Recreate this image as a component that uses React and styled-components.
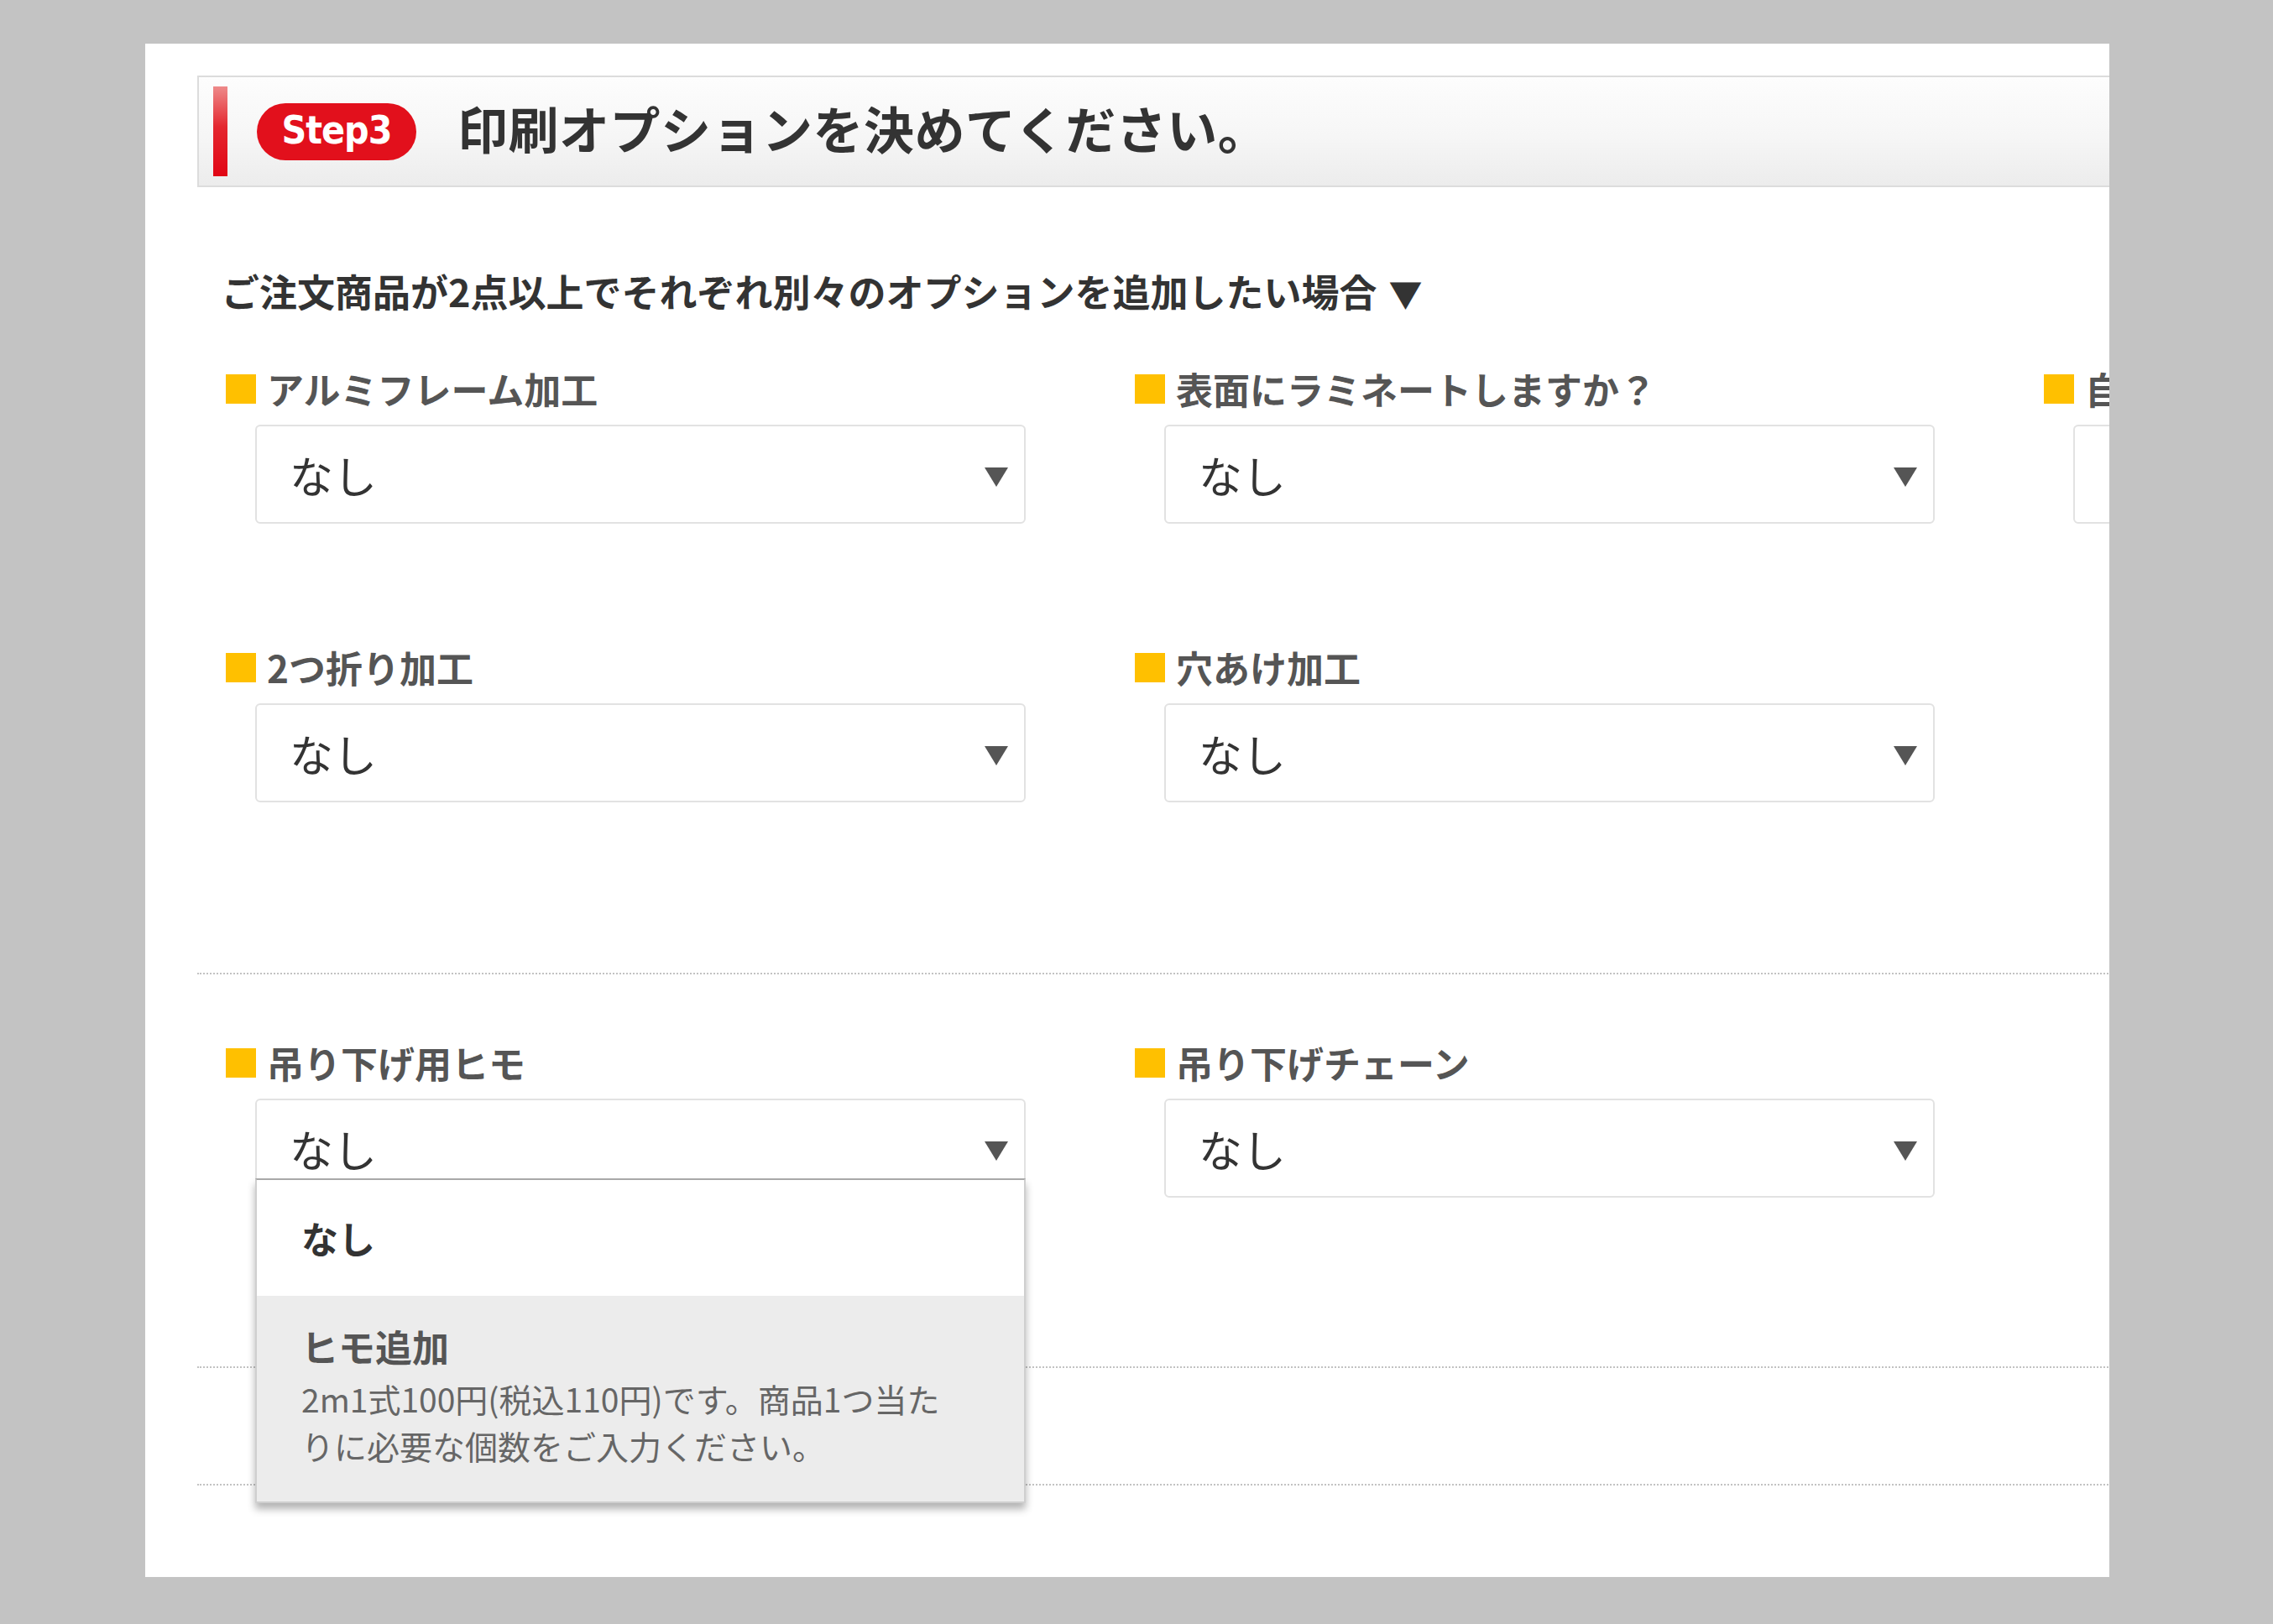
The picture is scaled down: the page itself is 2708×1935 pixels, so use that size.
import React from "react";
import styled, { createGlobalStyle } from "styled-components";

const Global = createGlobalStyle`
  html, body { margin: 0; padding: 0; }
  body {
    background: #c3c3c3;
    font-family: "Noto Sans CJK JP", "Noto Sans", sans-serif;
  }
`;

const Page = styled.div`
  box-sizing: border-box;
  height: 1935px;
  padding: 52px 0 0 173px;
  background: #c3c3c3;
`;

const Panel = styled.div`
  box-sizing: border-box;
  width: 2340px;
  height: 1827px;
  background: #fff;
  overflow: hidden;
  padding: 38px 0 0 62px;
`;

const Inner = styled.div`
  width: 2600px;
`;

const Header = styled.div`
  box-sizing: border-box;
  height: 133px;
  display: flex;
  align-items: center;
  border: 2px solid #dcdcdc;
  border-right: none;
  background: linear-gradient(#fdfdfd 0%, #f6f6f6 55%, #ececec 100%);
`;

const RedBar = styled.div`
  width: 17px;
  height: 107px;
  margin-left: 17px;
  background: linear-gradient(#ee8a8a 0%, #e4272f 45%, #e10514 100%);
`;

const Badge = styled.div`
  box-sizing: border-box;
  width: 190px;
  height: 68px;
  margin-left: 35px;
  border-radius: 34px;
  background: #e2101c;
  color: #fff;
  display: flex;
  align-items: center;
  justify-content: center;
  font-family: "DejaVu Sans Condensed", "DejaVu Sans", sans-serif;
  font-weight: 700;
  font-size: 46px;
  letter-spacing: -1px;
  padding-bottom: 4px;
`;

const Title = styled.h1`
  margin: 0 0 0 49px;
  padding-bottom: 10px;
  font-size: 60px;
  font-weight: 700;
  color: #333;
  line-height: 1;
  letter-spacing: 0.5px;
`;

const Lead = styled.p`
  margin: 94px 0 0 29px;
  font-size: 45px;
  line-height: 60px;
  height: 60px;
  font-weight: 700;
  color: #333;
`;

const LeadMark = styled.span`
  margin-left: 14px;
  font-size: 40px;
`;

const Grid = styled.div`
  display: grid;
  grid-template-columns: repeat(3, 953px);
  column-gap: 130px;
  row-gap: 146px;
  align-items: start;
  margin: ${(p) => p.$top}px 0 0 34px;
`;

const Item = styled.div`
  display: flex;
  flex-direction: column;
`;

const Label = styled.div`
  display: flex;
  align-items: center;
  gap: 13px;
  height: 50px;
  font-size: 44px;
  font-weight: 700;
  color: #555;
  white-space: nowrap;
`;

const Square = styled.span`
  width: 36px;
  height: 35px;
  background: #ffc000;
  flex: none;
`;

const SelectWrap = styled.div`
  position: relative;
  margin: 18px 0 0 35px;
  width: 918px;
`;

const Select = styled.div`
  box-sizing: border-box;
  height: 118px;
  border: 2px solid #e2e2e2;
  border-radius: 6px;
  background: #fff;
  display: flex;
  align-items: center;
  justify-content: space-between;
  padding: 0 19px 0 39px;
  font-size: 52px;
  color: #333;
`;

const Arrow = styled.span`
  width: 0;
  height: 0;
  border-left: 14px solid transparent;
  border-right: 14px solid transparent;
  border-top: 23px solid #555;
  margin-top: 6px;
`;

const Menu = styled.div`
  position: absolute;
  top: 95px;
  left: 0;
  width: 100%;
  box-sizing: border-box;
  border: 2px solid #cfcfcf;
  border-top-color: #a8a8a8;
  background: #fff;
  box-shadow: 0 7px 9px rgba(0, 0, 0, 0.3);
  z-index: 2;
`;

const MenuItem = styled.div`
  box-sizing: border-box;
  min-height: ${(p) => p.$h}px;
  padding: ${(p) => (p.$active ? "34px 40px 39px 53px" : "0 40px 0 53px")};
  display: flex;
  flex-direction: column;
  justify-content: ${(p) => (p.$active ? "flex-start" : "center")};
  background: ${(p) => (p.$active ? "#ececec" : "#fff")};
`;

const MenuTitle = styled.div`
  font-size: 44px;
  line-height: 52px;
  font-weight: 700;
  color: ${(p) => (p.$muted ? "#555" : "#333")};
`;

const MenuDesc = styled.div`
  margin-top: 8px;
  font-size: 39px;
  line-height: 56px;
  color: #666;
`;

const Dotted = styled.div`
  margin-top: ${(p) => p.$top}px;
  border-top: 2px dotted #c2c2c2;
`;

const Field = ({ label, open }) => (
  <Item>
    <Label>
      <Square />
      {label}
    </Label>
    <SelectWrap>
      <Select>
        <span>なし</span>
        <Arrow />
      </Select>
      {open && (
        <Menu>
          <MenuItem $h={138}>
            <MenuTitle>なし</MenuTitle>
          </MenuItem>
          <MenuItem $h={245} $active>
            <MenuTitle $muted>ヒモ追加</MenuTitle>
            <MenuDesc>
              2m1式100円(税込110円)です。商品1つ当た
              <br />
              りに必要な個数をご入力ください。
            </MenuDesc>
          </MenuItem>
        </Menu>
      )}
    </SelectWrap>
  </Item>
);

export default function App() {
  return (
    <>
      <Global />
      <Page>
        <Panel>
          <Inner>
            <Header>
              <RedBar />
              <Badge>Step3</Badge>
              <Title>印刷オプションを決めてください。</Title>
            </Header>
            <Lead>
              ご注文商品が2点以上でそれぞれ別々のオプションを追加したい場合
              <LeadMark>▼</LeadMark>
            </Lead>
            <Grid $top={61}>
              <Field label="アルミフレーム加工" />
              <Field label="表面にラミネートしますか？" />
              <Field label="自立スタンド" />
              <Field label="2つ折り加工" />
              <Field label="穴あけ加工" />
            </Grid>
            <Dotted $top={203} />
            <Grid $top={80}>
              <Field label="吊り下げ用ヒモ" open />
              <Field label="吊り下げチェーン" />
            </Grid>
            <Dotted $top={201} />
            <Dotted $top={138} />
          </Inner>
        </Panel>
      </Page>
    </>
  );
}
